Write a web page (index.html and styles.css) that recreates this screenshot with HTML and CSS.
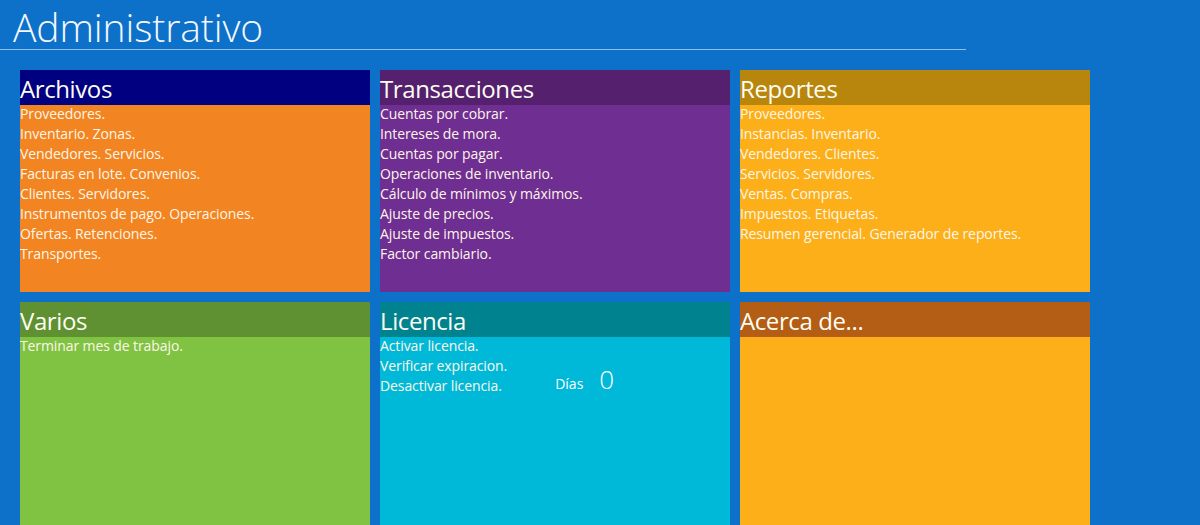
FILE: index.html
```html
<!DOCTYPE html>
<html lang="es">
<head>
<meta charset="utf-8">
<title>Administrativo</title>
<link rel="stylesheet" href="styles.css">
</head>
<body>
<div class="page">
  <header class="top">
    <h1 class="title">Administrativo</h1>
  </header>
  <main class="grid">
    <section class="tile t-archivos">
      <h2 class="tile-head">Archivos</h2>
      <ul class="tile-list">
        <li>Proveedores.</li>
        <li>Inventario. Zonas.</li>
        <li>Vendedores. Servicios.</li>
        <li>Facturas en lote. Convenios.</li>
        <li>Clientes. Servidores.</li>
        <li>Instrumentos de pago. Operaciones.</li>
        <li>Ofertas. Retenciones.</li>
        <li>Transportes.</li>
      </ul>
    </section>
    <section class="tile t-trans">
      <h2 class="tile-head">Transacciones</h2>
      <ul class="tile-list">
        <li>Cuentas por cobrar.</li>
        <li>Intereses de mora.</li>
        <li>Cuentas por pagar.</li>
        <li>Operaciones de inventario.</li>
        <li>Cálculo de mínimos y máximos.</li>
        <li>Ajuste de precios.</li>
        <li>Ajuste de impuestos.</li>
        <li>Factor cambiario.</li>
      </ul>
    </section>
    <section class="tile t-reportes">
      <h2 class="tile-head">Reportes</h2>
      <ul class="tile-list">
        <li>Proveedores.</li>
        <li>Instancias. Inventario.</li>
        <li>Vendedores. Clientes.</li>
        <li>Servicios. Servidores.</li>
        <li>Ventas. Compras.</li>
        <li>Impuestos. Etiquetas.</li>
        <li>Resumen gerencial. Generador de reportes.</li>
      </ul>
    </section>
    <section class="tile t-varios">
      <h2 class="tile-head">Varios</h2>
      <ul class="tile-list">
        <li>Terminar mes de trabajo.</li>
      </ul>
    </section>
    <section class="tile t-licencia">
      <h2 class="tile-head">Licencia</h2>
      <div class="lic-body">
        <ul class="tile-list">
          <li>Activar licencia.</li>
          <li>Verificar expiracion.</li>
          <li>Desactivar licencia.</li>
        </ul>
        <div class="dias">
          <span class="dias-label">Días</span>
          <span class="dias-num">0</span>
        </div>
      </div>
    </section>
    <section class="tile t-acerca">
      <h2 class="tile-head">Acerca de...</h2>
    </section>
  </main>
</div>
</body>
</html>
```
FILE: styles.css
```css
html, body {
  margin: 0;
  padding: 0;
  height: 100%;
  overflow: hidden;
}
body {
  background: #0d70c9;
  font-family: "Open Sans", "Noto Sans", sans-serif;
  color: #ffffff;
}
.page {
  display: flex;
  flex-direction: column;
}
.top {
  width: 966px;
  height: 49px;
  border-bottom: 1px solid #8cc0ec;
}
.title {
  margin: 0;
  padding-left: 13px;
  font-weight: 300;
  font-size: 39px;
  line-height: 60px;
  margin-top: -3px;
  letter-spacing: -0.1px;
  color: #f4f8fc;
}
.grid {
  display: grid;
  grid-template-columns: repeat(3, 350px);
  grid-template-rows: 222px 240px;
  gap: 10px;
  padding: 20px 0 0 20px;
}
.tile {
  display: flex;
  flex-direction: column;
}
.tile-head {
  margin: 0;
  height: 35px;
  font-weight: 400;
  font-size: 24px;
  line-height: 38px;
  letter-spacing: -0.4px;
  color: #fdfdf4;
}
.tile-list {
  list-style: none;
  margin: -1px 0 0 0;
  padding: 0;
  font-size: 14px;
  line-height: 20px;
  letter-spacing: -0.1px;
  color: #fdf6e8;
}
.tile-list li {
  white-space: nowrap;
}
.t-archivos { background: #f28421; }
.t-archivos .tile-head { background: #000080; }
.t-trans { background: #6f2e92; }
.t-trans .tile-head { background: #55216e; }
.t-reportes { background: #fcaf18; }
.t-reportes .tile-head { background: #b8860c; }
.t-varios { background: #80c343; }
.t-varios .tile-head { background: #5f9031; }
.t-licencia { background: #00b9d9; }
.t-licencia .tile-head { background: #01838f; }
.t-acerca { background: #fcaf18; }
.t-acerca .tile-head { background: #b35d15; }
.lic-body {
  display: flex;
  align-items: flex-start;
}
.dias {
  display: flex;
  align-items: baseline;
  gap: 16px;
  margin-left: 48px;
  margin-top: 24px;
}
.dias-label {
  font-size: 14px;
}
.dias-num {
  font-size: 26px;
  font-weight: 300;
}
```
